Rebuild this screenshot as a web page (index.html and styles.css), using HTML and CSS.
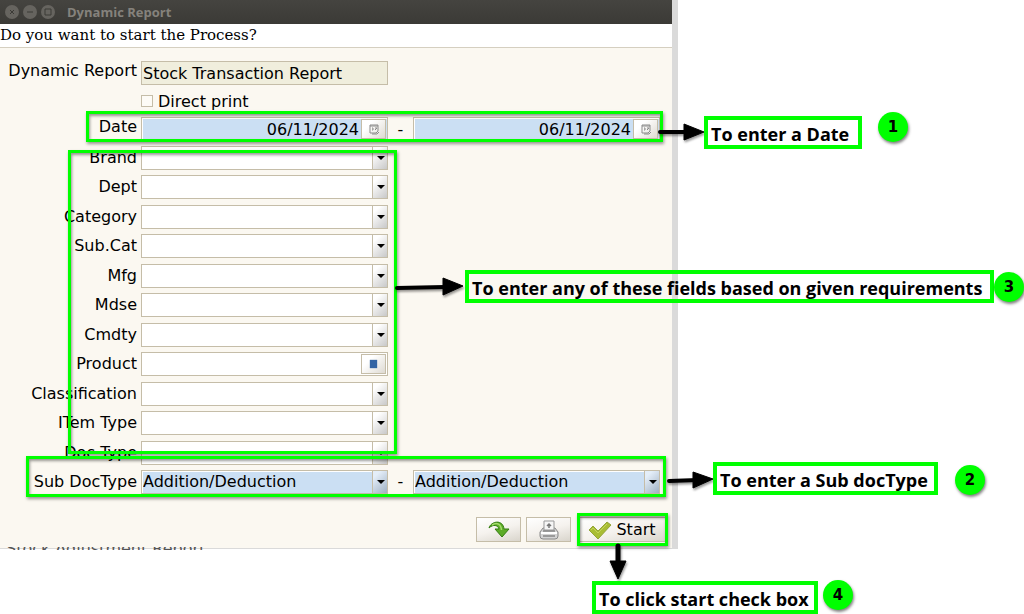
FILE: index.html
```html
<!DOCTYPE html>
<html lang="en">
<head>
  <meta charset="UTF-8">
  <meta name="viewport" content="width=device-width, initial-scale=1.0">
  <title>Dynamic Report</title>
  <link rel="stylesheet" href="styles.css">
</head>
<body>
  <main class="canvas">

    <section class="window">
      <header class="titlebar">
        <button class="win-btn" type="button" aria-label="Close">
          <svg viewBox="0 0 14 14"><path d="M5 5l4 4M9 5l-4 4"/></svg>
        </button>
        <button class="win-btn" type="button" aria-label="Minimize">
          <svg viewBox="0 0 14 14"><path d="M4 7h6"/></svg>
        </button>
        <button class="win-btn" type="button" aria-label="Maximize">
          <svg viewBox="0 0 14 14"><path d="M4 4h6v6h-6z"/></svg>
        </button>
        <h1>Dynamic Report</h1>
      </header>

      <p class="question">Do you want to start the Process?</p>

      <form class="form">
        <div class="row raised">
          <label for="report">Dynamic Report</label>
          <input class="field report" id="report" type="text" value="Stock Transaction Report" readonly>
        </div>
        <div class="row check-row">
          <span></span>
          <div class="check">
            <input type="checkbox" id="direct">
            <label for="direct">Direct print</label>
          </div>
        </div>
        <div class="row raised">
          <label for="date-from">Date</label>
          <div class="field required date">
            <input id="date-from" type="text" value="06/11/2024">
            <button class="pick" type="button" aria-label="Calendar">
              <svg viewBox="0 0 12 12"><path d="M2 2h8v6l-2 2H2zM2 3h8M4 5h1v2H4M7 5h2L7 7M4 11h5l2-2"/></svg>
            </button>
          </div>
          <span class="dash">-</span>
          <div class="field required date">
            <input id="date-to" type="text" value="06/11/2024" aria-label="Date to">
            <button class="pick" type="button" aria-label="Calendar">
              <svg viewBox="0 0 12 12"><path d="M2 2h8v6l-2 2H2zM2 3h8M4 5h1v2H4M7 5h2L7 7M4 11h5l2-2"/></svg>
            </button>
          </div>
        </div>

        <div class="filters">
          <div class="row">
            <label for="brand">Brand</label>
            <div class="field combo"><select id="brand"><option></option></select></div>
          </div>
          <div class="row">
            <label for="dept">Dept</label>
            <div class="field combo"><select id="dept"><option></option></select></div>
          </div>
          <div class="row">
            <label for="category">Category</label>
            <div class="field combo"><select id="category"><option></option></select></div>
          </div>
          <div class="row">
            <label for="subcat">Sub.Cat</label>
            <div class="field combo"><select id="subcat"><option></option></select></div>
          </div>
          <div class="row">
            <label for="mfg">Mfg</label>
            <div class="field combo"><select id="mfg"><option></option></select></div>
          </div>
          <div class="row">
            <label for="mdse">Mdse</label>
            <div class="field combo"><select id="mdse"><option></option></select></div>
          </div>
          <div class="row">
            <label for="cmdty">Cmdty</label>
            <div class="field combo"><select id="cmdty"><option></option></select></div>
          </div>
          <div class="row">
            <label for="product">Product</label>
            <div class="field">
              <input id="product" type="text">
              <button class="pick" type="button" aria-label="Find product"><span class="blue-dot"></span></button>
            </div>
          </div>
          <div class="row">
            <label for="classification">Classification</label>
            <div class="field combo"><select id="classification"><option></option></select></div>
          </div>
          <div class="row">
            <label for="itemtype">ITem Type</label>
            <div class="field combo"><select id="itemtype"><option></option></select></div>
          </div>
          <div class="row">
            <label for="doctype">Doc Type</label>
            <div class="field combo"><select id="doctype"><option></option></select></div>
          </div>
          <div class="row">
            <label for="subdoc">Sub DocType</label>
            <div class="field combo required"><select id="subdoc"><option>Addition/Deduction</option></select></div>
            <span class="dash">-</span>
            <div class="field combo required"><select id="subdoc-to" aria-label="Sub DocType to"><option>Addition/Deduction</option></select></div>
          </div>
        </div>

        <div class="actions">
          <button class="btn" type="button" aria-label="Refresh">
            <svg width="22" height="20" viewBox="0 0 22 20">
              <path d="M1 8C3 1 15 -1 16 9h5l-7 8-7-8h4C10 5 5 4 1 8z" fill="#5cab27" stroke="#347c12"/>
              <path d="M4 5c5-3 9-1 9.500 5" fill="none" stroke="#a5dc6c" stroke-width="1.500"/>
            </svg>
          </button>
          <button class="btn" type="button" aria-label="Print">
            <svg width="20" height="20" viewBox="0 0 20 20">
              <path d="M4 8h12l3 4v4q0 3-3 3H4q-3 0-3-3v-4z" fill="#d3d3d3" stroke="#8a8a8a"/>
              <path d="M5 1h10v9H5z" fill="#f6f6f6" stroke="#999"/>
              <path d="M10 8V4M8 6l2-2 2 2" fill="none" stroke="#777" stroke-width="1.500"/>
              <path d="M2 13h16" stroke="#fff" stroke-width="2"/>
              <path d="M4 11h12M4 16h12" stroke="#888" stroke-width="1.500"/>
            </svg>
          </button>
          <button class="btn start" type="submit">
            <svg width="24" height="20" viewBox="0 0 24 20">
              <path d="M1 10l4-4 5 5 9-9 4 3-13 14z" fill="#a9bd34" stroke="#93a43a"/>
              <path d="M3 10l2-2 5 5 9-9" fill="none" stroke="#c3d35b"/>
            </svg>
            Start
          </button>
        </div>
      </form>
      <p class="behind">Stock Adjustment Report</p>
    </section>

    <!-- green frames -->
    <div class="frame frame-date"></div>
    <div class="frame frame-filters"></div>
    <div class="frame frame-sub"></div>
    <div class="frame frame-start"></div>

    <!-- arrows -->
    <svg class="arrows" width="1024" height="614" viewBox="0 0 1024 614">
      <g stroke="#000" stroke-width="4" stroke-linecap="round">
        <path d="M660 132H690"/>
        <path d="M397 288L445 287"/>
        <path d="M669 481L698 480"/>
        <path d="M618 546V565" stroke-width="5"/>
      </g>
      <g stroke="#000" stroke-width="1" stroke-linejoin="round">
        <path d="M684 124l20 8-20 8z"/>
        <path d="M443 278l20 8-20 9z"/>
        <path d="M693 472l20 7-20 9z"/>
        <path d="M610 561h16l-8 18z"/>
      </g>
    </svg>

    <!-- callouts -->
    <p class="note note-date">To enter a Date</p>
    <p class="note note-filters">To enter any of these fields based on given requirements</p>
    <p class="note note-sub">To enter a Sub docType</p>
    <p class="note note-start">To click start check box</p>

    <span class="badge badge-1">1</span>
    <span class="badge badge-2">2</span>
    <span class="badge badge-3">3</span>
    <span class="badge badge-4">4</span>
  </main>
</body>
</html>
```
FILE: styles.css
```css
:root {
  --green: #00ff00;
  --line: #c5bda8;
  --form-bg: #fbf8f1;
}

* {
  box-sizing: border-box;
}

body {
  margin: 0;
  background: #fff;
  color: #000;
  font-family: "DejaVu Sans", sans-serif;
  font-size: 16px;
  overflow: hidden;
}

h1, p {
  margin: 0;
}

input, select, button {
  font: inherit;
  color: inherit;
}

.canvas {
  position: relative;
  min-height: 100vh;
}

/* Dialog window */
.window {
  position: relative;
  max-width: 678px;
  border-right: 6px solid #dadada;
  border-bottom: 1px solid #dadada;
  background: var(--form-bg);
}

.titlebar {
  display: flex;
  align-items: center;
  gap: 4px;
  height: 24px;
  padding-left: 5px;
  background: linear-gradient(#454440, #3b3a36);
}

.win-btn {
  width: 14px;
  height: 14px;
  padding: 0;
  border: none;
  border-radius: 50%;
  background: #66645f;
}

.win-btn svg {
  display: block;
  fill: none;
  stroke: #3b3a36;
}

.titlebar h1 {
  margin-left: 8px;
  color: #85827c;
  font: bold 13px "Open Sans", sans-serif;
}

.question {
  height: 24px;
  border-bottom: 1px solid #d5cfc0;
  background: #fff;
  font: 15px/22px "DejaVu Serif", serif;
}

.form {
  display: flex;
  flex-direction: column;
  gap: 6px;
  padding: 13px 6px 6px 0;
}

.row {
  display: flex;
  align-items: center;
  gap: 4px;
}

.row > :first-child {
  width: 137px;
  text-align: right;
  line-height: 20px;
}

.raised {
  height: 24px;
}

.raised > label {
  padding-bottom: 5px;
}

.field {
  position: relative;
  display: flex;
  width: 247px;
  height: 24px;
  border: 1px solid var(--line);
  background: #fff;
}

.field input,
.field select {
  flex: 1;
  min-width: 0;
  padding: 0 1px;
  border: none;
  background: none;
  appearance: none;
  outline: none;
}

input.report {
  padding: 0 1px;
  background: #f0eedd;
  outline: none;
}

.field.required {
  background: #cbdff3;
  box-shadow: inset 1px 1px #fff;
}

.date input {
  text-align: right;
}

.dash {
  width: 17px;
  text-align: center;
}

.pick {
  display: flex;
  align-items: center;
  justify-content: center;
  width: 25px;
  margin: 1px;
  padding: 0;
  border: 1px solid var(--line);
  background: linear-gradient(135deg, #fff 30%, #dedad2);
}

.pick svg {
  width: 12px;
  height: 12px;
  fill: none;
  stroke: #8b8b8b;
}

.blue-dot {
  width: 7px;
  height: 8px;
  background: #3465a4;
  box-shadow: 0 0 1px #3465a4;
}

/* Drop-down arrow cell */
.combo::before {
  content: '';
  position: absolute;
  top: 0;
  right: 0;
  bottom: 0;
  width: 14px;
  border-left: 1px solid var(--line);
  background: linear-gradient(135deg, #fff 20%, #c8c8c8);
  pointer-events: none;
}

.combo.required::before {
  background: linear-gradient(135deg, #e4eef9 20%, #9fb0c2);
}

.combo::after {
  content: '';
  position: absolute;
  top: 9px;
  right: 2px;
  border: 4px solid transparent;
  border-top-color: #000;
  border-bottom: none;
  pointer-events: none;
}

.check {
  display: flex;
  align-items: center;
  gap: 5px;
  height: 20px;
}

.check input {
  width: 12px;
  height: 12px;
  margin: 0;
  border: 1px solid var(--line);
  background: #fdfbf6;
  appearance: none;
}

.filters {
  display: flex;
  flex-direction: column;
  justify-content: space-between;
  min-height: 348px;
  margin-top: -1px;
}

.actions {
  display: flex;
  justify-content: flex-end;
  gap: 5px;
  margin-top: 17px;
}

.btn {
  display: flex;
  align-items: center;
  justify-content: center;
  gap: 4px;
  width: 45px;
  height: 25px;
  padding: 0;
  border: 1px solid var(--line);
  background: linear-gradient(165deg, #fff, #f5f2ee 50%, #d9d5cc);
}

.start {
  width: 88px;
  margin-left: 2px;
}

/* Sliver of the window lying below */
.behind {
  position: absolute;
  left: 6px;
  bottom: -2px;
  height: 3px;
  overflow: hidden;
  color: #555;
  line-height: 3px;
}

/* Annotations */
.frame {
  position: absolute;
  border: 3px solid var(--green);
  box-shadow: 1px 2px 3px rgba(0, 0, 0, 0.4), inset 1px 2px 3px rgba(0, 0, 0, 0.4);
  pointer-events: none;
}

.frame-date {
  left: 86px;
  top: 111px;
  width: 577px;
  height: 31px;
}

.frame-filters {
  left: 68px;
  top: 150px;
  width: 329px;
  height: 304px;
}

.frame-sub {
  left: 26px;
  top: 456px;
  width: 640px;
  height: 41px;
}

.frame-start {
  left: 577px;
  top: 513px;
  width: 91px;
  height: 33px;
}

.arrows {
  position: absolute;
  left: 0;
  top: 0;
  filter: drop-shadow(1px 2px 1px rgba(0, 0, 0, 0.4));
  pointer-events: none;
}

.note {
  position: absolute;
  height: 33px;
  padding: 3px;
  border: 4px solid var(--green);
  font: bold 18px/22px "Open Sans", sans-serif;
  white-space: nowrap;
}

.note-date {
  left: 704px;
  top: 116px;
  width: 158px;
}

.note-filters {
  left: 465px;
  top: 270px;
  width: 529px;
}

.note-sub {
  left: 713px;
  top: 462px;
  width: 225px;
}

.note-start {
  left: 592px;
  top: 581px;
  width: 226px;
}

.badge {
  position: absolute;
  width: 30px;
  height: 30px;
  border-radius: 50%;
  background: var(--green);
  box-shadow: 1px 2px 3px rgba(0, 0, 0, 0.5);
  font: bold 15px/30px "DejaVu Sans", sans-serif;
  text-align: center;
}

.badge-1 {
  left: 878px;
  top: 112px;
}

.badge-2 {
  left: 955px;
  top: 465px;
}

.badge-3 {
  left: 994px;
  top: 272px;
}

.badge-4 {
  left: 823px;
  top: 580px;
}
```
